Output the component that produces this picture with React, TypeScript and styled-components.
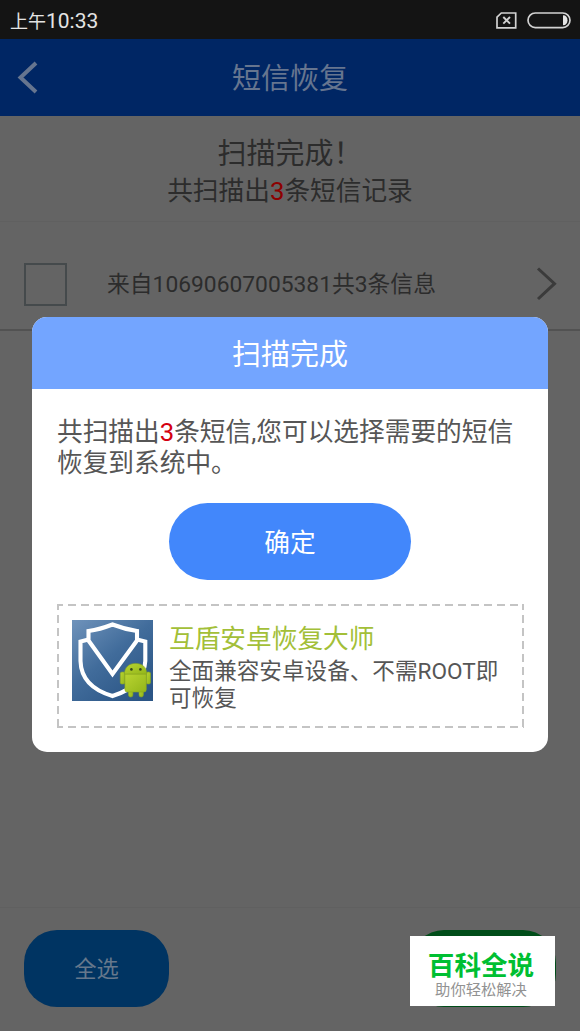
import React from "react";
import styled, { createGlobalStyle } from "styled-components";

const Global = createGlobalStyle`
  * { box-sizing: border-box; }
  body {
    margin: 0;
    background: #646464;
    font-family: Roboto, "Noto Sans CJK SC", sans-serif;
  }
`;

const Screen = styled.div`
  position: relative;
  width: 580px;
  height: 1031px;
  overflow: hidden;
  display: flex;
  flex-direction: column;
  background: #646464;
  color: #2c2c2c;
`;

const StatusBar = styled.div`
  height: 39px;
  flex: none;
  display: flex;
  align-items: center;
  justify-content: space-between;
  padding: 1px 9px 0 10px;
  background: #141414;
  color: #e4e4e4;
  font-size: 18px;
`;

const Clock = styled.div`
  display: flex;
  align-items: baseline;
`;

const ClockDigits = styled.span`
  font-size: 21px;
`;

const StatusIcons = styled.div`
  display: flex;
  align-items: center;
  gap: 10px;
  svg { display: block; }
`;

const Header = styled.header`
  height: 77px;
  flex: none;
  display: grid;
  grid-template-columns: 58px 1fr 58px;
  align-items: center;
  background: #002664;
  color: #66758f;
  svg { display: block; }
`;

const HeaderTitle = styled.h1`
  margin: 0;
  padding-top: 3px;
  text-align: center;
  font-size: 29px;
  line-height: 40px;
  font-weight: 400;
`;

const Summary = styled.section`
  height: 106px;
  flex: none;
  padding-top: 18px;
  text-align: center;
  border-bottom: 1px solid #606060;
`;

const SummaryTitle = styled.div`
  font-size: 29px;
  line-height: 40px;
`;

const SummaryText = styled.div`
  font-size: 25.7px;
  line-height: 34px;
`;

const Count = styled.span<{ $color: string }>`
  color: ${(p) => p.$color};
`;

const Row = styled.div`
  height: 109px;
  flex: none;
  display: flex;
  align-items: center;
  padding: 17px 22px 0 24px;
  border-bottom: 2px solid #525252;
  svg { display: block; }
`;

const Box = styled.div`
  width: 43px;
  height: 43px;
  border: 2px solid #454a4c;
`;

const RowText = styled.div`
  flex: 1;
  margin-left: 40px;
  padding-top: 2px;
  font-size: 22.8px;
  line-height: 32px;
  white-space: nowrap;
`;

const Spacer = styled.div`
  flex: 1;
`;

const Footer = styled.footer`
  height: 124px;
  flex: none;
  display: flex;
  justify-content: space-between;
  padding: 22px 24px 0 24px;
  border-top: 1px solid #606060;
`;

const FooterButton = styled.button<{ $bg: string }>`
  width: 145px;
  height: 77px;
  padding: 0 0 4px;
  border: 0;
  border-radius: 33px;
  background: ${(p) => p.$bg};
  color: #66788c;
  font: inherit;
  font-size: 22.3px;
`;

const Dialog = styled.div`
  position: absolute;
  left: 32px;
  top: 317px;
  width: 516px;
  height: 435px;
  border-radius: 15px;
  overflow: hidden;
  background: #fff;
  color: #565656;
  display: flex;
  flex-direction: column;
`;

const DialogTitle = styled.div`
  height: 72px;
  background: #73a5ff;
  color: #fff;
  font-size: 29px;
  line-height: 77px;
  text-align: center;
`;

const DialogBody = styled.div`
  display: flex;
  flex-direction: column;
  padding: 28px 24px 0 25px;
`;

const Message = styled.p`
  margin: 0;
  font-size: 25.7px;
  line-height: 31px;
  white-space: nowrap;
`;

const Confirm = styled.button`
  align-self: center;
  width: 242px;
  height: 77px;
  margin: 24px 1px 24px 0;
  padding: 0 0 2px;
  border: 0;
  border-radius: 39px;
  background: #4287fb;
  color: #fff;
  font: inherit;
  font-size: 25.7px;
`;

const dash = "#c4c4c4 0 6px, transparent 6px 11px, #c4c4c4 11px 13px";

const Promo = styled.div`
  height: 124px;
  display: flex;
  gap: 16px;
  padding: 16px 15px 0 15px;
  background:
    repeating-linear-gradient(90deg, ${dash}) 0 0 / 100% 2px no-repeat,
    repeating-linear-gradient(90deg, ${dash}) 0 100% / 100% 2px no-repeat,
    repeating-linear-gradient(180deg, ${dash}) 0 0 / 2px 100% no-repeat,
    repeating-linear-gradient(180deg, ${dash}) 100% 0 / 2px 100% no-repeat;
  svg { display: block; flex: none; }
`;

const PromoName = styled.div`
  margin-top: 2px;
  color: #a3bf38;
  font-size: 25.7px;
  line-height: 34px;
`;

const PromoText = styled.div`
  margin-top: 2px;
  font-size: 22.6px;
  line-height: 27px;
  white-space: nowrap;
`;

const Stamp = styled.div`
  position: absolute;
  left: 410px;
  top: 936px;
  width: 145px;
  height: 70px;
  padding-right: 3px;
  background: #fff;
  text-align: center;
`;

const StampName = styled.div`
  margin-top: 12px;
  color: #00bf32;
  font-size: 26.6px;
  line-height: 36px;
  font-weight: 700;
`;

const StampText = styled.div`
  margin-top: -4px;
  color: #929292;
  font-size: 15.3px;
  line-height: 20px;
`;

const NoSim = () => (
  <svg width="21" height="17" viewBox="0 0 21 17" fill="none" stroke="#d2d2d2" strokeWidth="1.7">
    <path d="M5.3 1H19.7V15.8H1V5.2Z" />
    <path d="M7.3 5L14 11.7M14 5L7.3 11.7" strokeWidth="1.9" />
  </svg>
);

const Battery = () => (
  <svg width="44" height="17" viewBox="0 0 44 17" fill="none">
    <rect x="1" y="1" width="42" height="14.6" rx="7.3" stroke="#d2d2d2" strokeWidth="1.7" />
    <path d="M36 3.3C39 3.3 40.5 5.4 40.5 8.3S39 13.3 36 13.3Z" fill="#e4e4e4" />
  </svg>
);

const Back = () => (
  <svg width="58" height="40" viewBox="0 0 58 40" fill="none" stroke="#66758f" strokeWidth="4">
    <path d="M36 5L20.5 19.5L36 34" />
  </svg>
);

const Forward = () => (
  <svg width="24" height="38" viewBox="0 0 24 38" fill="none" stroke="#3b3b3b" strokeWidth="3">
    <path d="M4 3.5L20.5 18.7L4 34" />
  </svg>
);

const ShieldLogo = () => (
  <svg width="81" height="81" viewBox="0 0 81 81">
    <defs>
      <linearGradient id="sky" x1="0" y1="0" x2="0.8" y2="1">
        <stop offset="0" stopColor="#6f93bb" />
        <stop offset="0.5" stopColor="#416c9b" />
        <stop offset="1" stopColor="#2b5585" />
      </linearGradient>
      <linearGradient id="robot" x1="0" y1="0" x2="1" y2="1">
        <stop offset="0" stopColor="#b9d431" />
        <stop offset="1" stopColor="#93b61a" />
      </linearGradient>
    </defs>
    <rect width="81" height="81" fill="url(#sky)" />
    <g fill="none" stroke="#fff" strokeWidth="4.1">
      <path d="M16.5 19.5L8.5 21.5V41C9 58 20 70 40.5 76C61 70 72.5 57 73.3 41V21.5L65 19.5" />
      <path d="M16.5 20.5V11C27 9.5 34 7 40.5 4.5C47 7 54.5 9.5 65 11V20.5L40.5 54Z" />
    </g>
    <g fill="url(#robot)" stroke="#86a520" strokeWidth="0.6">
      <rect x="48.3" y="52" width="4.6" height="12" rx="1.6" />
      <rect x="74.3" y="52" width="4.2" height="12" rx="1.6" />
      <rect x="56.5" y="66" width="4.4" height="11" rx="2.1" />
      <rect x="67" y="66" width="4.4" height="11" rx="2.1" />
      <path d="M52.9 54H74.3V69.5Q74.3 72 72 72H55.4Q52.9 72 52.9 69.5Z" />
      <path d="M52.4 54C52.6 47 57 43.4 63.6 43.4S74.6 47 74.8 54Z" />
    </g>
    <circle cx="59.4" cy="49.4" r="1.3" fill="#35471c" />
    <circle cx="68.4" cy="49.4" r="1.3" fill="#35471c" />
  </svg>
);

export default function App() {
  return (
    <>
      <Global />
      <Screen>
        <StatusBar>
          <Clock>上午<ClockDigits>10:33</ClockDigits></Clock>
          <StatusIcons>
            <NoSim />
            <Battery />
          </StatusIcons>
        </StatusBar>
        <Header>
          <Back />
          <HeaderTitle>短信恢复</HeaderTitle>
        </Header>
        <Summary>
          <SummaryTitle>扫描完成！</SummaryTitle>
          <SummaryText>
            共扫描出<Count $color="#8d0000">3</Count>条短信记录
          </SummaryText>
        </Summary>
        <Row>
          <Box />
          <RowText>来自10690607005381共3条信息</RowText>
          <Forward />
        </Row>
        <Spacer />
        <Footer>
          <FooterButton $bg="#003462">全选</FooterButton>
          <FooterButton $bg="#004d19" aria-hidden="true" />
        </Footer>

        <Dialog>
          <DialogTitle>扫描完成</DialogTitle>
          <DialogBody>
            <Message>
              共扫描出<Count $color="#d40010">3</Count>条短信,您可以选择需要的短信
              <br />
              恢复到系统中。
            </Message>
            <Confirm>确定</Confirm>
            <Promo>
              <ShieldLogo />
              <div>
                <PromoName>互盾安卓恢复大师</PromoName>
                <PromoText>
                  全面兼容安卓设备、不需ROOT即
                  <br />
                  可恢复
                </PromoText>
              </div>
            </Promo>
          </DialogBody>
        </Dialog>

        <Stamp>
          <StampName>百科全说</StampName>
          <StampText>助你轻松解决</StampText>
        </Stamp>
      </Screen>
    </>
  );
}
